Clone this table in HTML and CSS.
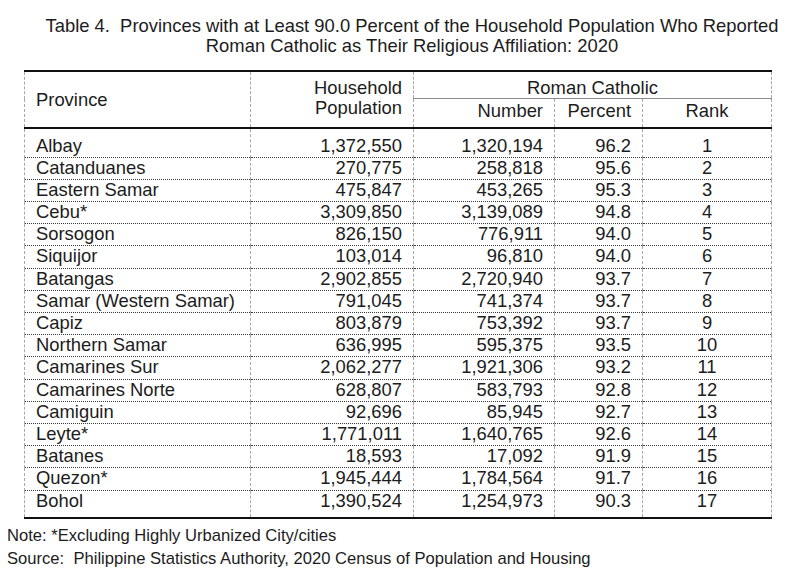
FILE: index.html
```html
<!DOCTYPE html>
<html lang="en">
<head>
<meta charset="utf-8">
<title>Table 4</title>
<link rel="stylesheet" href="styles.css">
</head>
<body>
<div class="page">
  <h1 class="title">Table 4.&nbsp; Provinces with at Least 90.0 Percent of the Household Population Who Reported<br>Roman Catholic as Their Religious Affiliation: 2020</h1>
  <table class="stats">
    <colgroup>
      <col class="c-prov">
      <col class="c-hh">
      <col class="c-num">
      <col class="c-pct">
      <col class="c-rank">
    </colgroup>
    <thead>
      <tr class="h1">
        <th rowspan="2" class="h-prov">Province</th>
        <th rowspan="2" class="h-hh">Household<br>Population</th>
        <th colspan="3" class="h-rc">Roman Catholic</th>
      </tr>
      <tr class="h2">
        <th class="h-num">Number</th>
        <th class="h-pct">Percent</th>
        <th class="h-rank">Rank</th>
      </tr>
    </thead>
    <tbody>
      <tr><td>Albay</td><td>1,372,550</td><td>1,320,194</td><td>96.2</td><td>1</td></tr>
      <tr><td>Catanduanes</td><td>270,775</td><td>258,818</td><td>95.6</td><td>2</td></tr>
      <tr><td>Eastern Samar</td><td>475,847</td><td>453,265</td><td>95.3</td><td>3</td></tr>
      <tr><td>Cebu*</td><td>3,309,850</td><td>3,139,089</td><td>94.8</td><td>4</td></tr>
      <tr><td>Sorsogon</td><td>826,150</td><td>776,911</td><td>94.0</td><td>5</td></tr>
      <tr><td>Siquijor</td><td>103,014</td><td>96,810</td><td>94.0</td><td>6</td></tr>
      <tr><td>Batangas</td><td>2,902,855</td><td>2,720,940</td><td>93.7</td><td>7</td></tr>
      <tr><td>Samar (Western Samar)</td><td>791,045</td><td>741,374</td><td>93.7</td><td>8</td></tr>
      <tr><td>Capiz</td><td>803,879</td><td>753,392</td><td>93.7</td><td>9</td></tr>
      <tr><td>Northern Samar</td><td>636,995</td><td>595,375</td><td>93.5</td><td>10</td></tr>
      <tr><td>Camarines Sur</td><td>2,062,277</td><td>1,921,306</td><td>93.2</td><td>11</td></tr>
      <tr><td>Camarines Norte</td><td>628,807</td><td>583,793</td><td>92.8</td><td>12</td></tr>
      <tr><td>Camiguin</td><td>92,696</td><td>85,945</td><td>92.7</td><td>13</td></tr>
      <tr><td>Leyte*</td><td>1,771,011</td><td>1,640,765</td><td>92.6</td><td>14</td></tr>
      <tr><td>Batanes</td><td>18,593</td><td>17,092</td><td>91.9</td><td>15</td></tr>
      <tr><td>Quezon*</td><td>1,945,444</td><td>1,784,564</td><td>91.7</td><td>16</td></tr>
      <tr><td>Bohol</td><td>1,390,524</td><td>1,254,973</td><td>90.3</td><td>17</td></tr>
    </tbody>
  </table>
  <div class="notes">
    <p class="note">Note: *Excluding Highly Urbanized City/cities</p>
    <p class="note">Source:&nbsp; Philippine Statistics Authority, 2020 Census of Population and Housing</p>
  </div>
</div>
</body>
</html>
```

FILE: styles.css
```css
html, body {
  margin: 0;
  padding: 0;
  background: #ffffff;
}

body {
  font-family: "Liberation Sans", Arial, sans-serif;
  font-size: 18.4px;
  color: #1c1c1c;
}

.page {
  padding: 16px 0 0 24px;
}

.title {
  margin: 0;
  font-size: 18.4px;
  font-weight: normal;
  line-height: 20px;
  text-align: center;
}

.stats {
  margin-top: 14px;
  width: 747px;
  border-collapse: collapse;
  table-layout: fixed;
  border-top: 2px solid #111;
  border-bottom: 2px solid #111;
}

.c-prov { width: 226px; }
.c-hh { width: 163px; }
.c-num { width: 141px; }
.c-pct { width: 88px; }
.c-rank { width: 129px; }

.stats th,
.stats td {
  font-weight: normal;
  line-height: 20px;
  padding: 0 11px 1.2px 11px;
  border-left: 1px dashed #a8a8a8;
  border-right: 1px dashed #a8a8a8;
  white-space: nowrap;
}

.stats th {
  text-align: right;
}

.h1 th {
  height: 25px;
  padding-top: 1px;
  padding-bottom: 0;
}

.h-prov {
  text-align: left !important;
  vertical-align: middle;
}

.h-hh {
  vertical-align: top;
  padding-top: 6px !important;
}

.h-rc {
  text-align: center !important;
  vertical-align: bottom;
  border-bottom: 1px solid #8a8a8a;
}

.h2 th {
  height: 25px;
  padding-top: 2px;
  padding-bottom: 1px;
  vertical-align: top;
}

.h2 .h-rank {
  text-align: center;
}

.stats thead tr:last-child th,
.stats thead .h-prov,
.stats thead .h-hh {
  border-bottom: 2px solid #111;
}

.stats td {
  text-align: right;
  border-bottom: 1px dotted #3a3a3a;
}

.stats td:first-child {
  text-align: left;
}

.stats td:last-child {
  text-align: center;
}

.stats tbody tr:first-child td {
  padding-top: 7px;
  padding-bottom: 0.7px;
}

.stats tbody tr:last-child td {
  padding-top: 0;
  padding-bottom: 6px;
  border-bottom: 2px solid #111;
}

.notes {
  margin-left: -17px;
  margin-top: 5px;
}

.note {
  margin: 0;
  line-height: 23px;
  font-size: 16.6px;
}
```
